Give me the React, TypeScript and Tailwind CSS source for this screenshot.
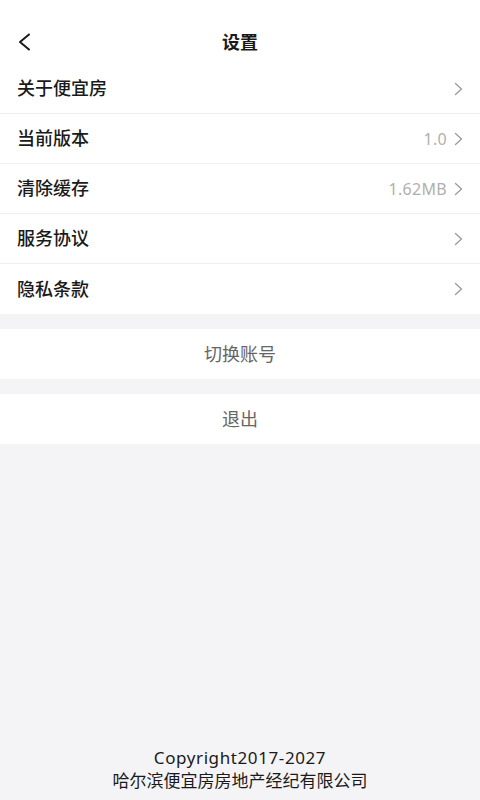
import React from "react";

const rows = [
  { label: "关于便宜房", value: "" },
  { label: "当前版本", value: "1.0" },
  { label: "清除缓存", value: "1.62MB" },
  { label: "服务协议", value: "" },
  { label: "隐私条款", value: "" },
];

const Chevron = () => (
  <svg width="9" height="14" viewBox="0 0 9 14" fill="none">
    <path d="M1.5 1.5 L7.5 7 L1.5 12.5" stroke="#9a9a9a" strokeWidth="1.3" strokeLinecap="round" strokeLinejoin="round" />
  </svg>
);

export default function App() {
  return (
    <div
      className="w-[480px] h-[800px] bg-[#f4f4f6] flex flex-col text-[#1a1a1a]"
      style={{ fontFamily: '"Noto Sans", "Noto Sans CJK SC", sans-serif' }}
    >
      <div className="h-[64px] bg-white flex items-end pb-[10px] relative">
        <div className="w-full flex items-center justify-center h-[24px]">
          <span className="text-[18px] font-bold">设置</span>
        </div>
        <svg className="absolute left-[17px] top-[33px]" width="16" height="18" viewBox="0 0 16 18" fill="none">
          <path d="M12 1.5 L3 9 L12 16.5" stroke="#1a1a1a" strokeWidth="2" strokeLinecap="round" strokeLinejoin="round" />
        </svg>
      </div>

      <div className="bg-white">
        {rows.map((r, i) => (
          <div
            key={r.label}
            className={
              "h-[50px] flex items-center justify-between pl-[17px] pr-[17px] " +
              (i < rows.length - 1 ? "border-b border-[#efefef]" : "")
            }
          >
            <span className="text-[18px] font-medium">{r.label}</span>
            <div className="flex items-center gap-[7px]">
              {r.value && <span className="text-[16px] tracking-[0.3px] text-[#b0b0b0]">{r.value}</span>}
              <Chevron />
            </div>
          </div>
        ))}
      </div>

      <div className="mt-[15px] h-[50px] bg-white flex items-center justify-center">
        <span className="text-[18px] text-[#666]">切换账号</span>
      </div>
      <div className="mt-[15px] h-[50px] bg-white flex items-center justify-center">
        <span className="text-[18px] text-[#666]">退出</span>
      </div>

      <div className="flex-1" />

      <div className="flex flex-col items-center pb-[8px] text-[#1a1a1a] text-[17px] leading-[23px]">
        <span className="tracking-[0.6px]">Copyright2017-2027</span>
        <span>哈尔滨便宜房房地产经纪有限公司</span>
      </div>
    </div>
  );
}
